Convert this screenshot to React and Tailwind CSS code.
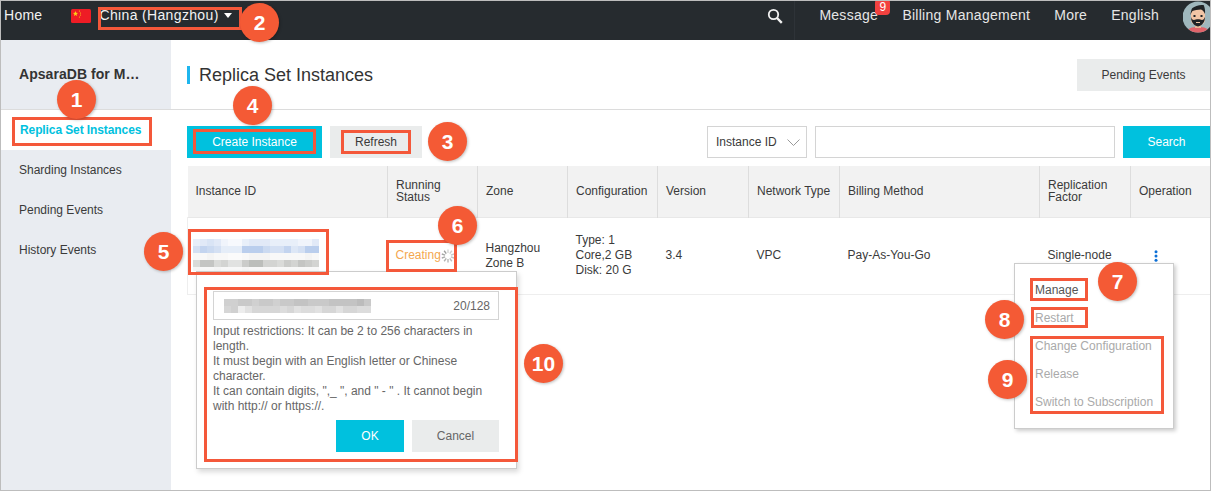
import React from "react";

function Box({ c }) {
  return <div className={"absolute border-[3px] border-[#f4583a] pointer-events-none " + c} />;
}

function Num({ n, c }) {
  return (
    <div className={"absolute w-[39px] h-[39px] rounded-full bg-[#f45a35] text-white font-bold text-[21px] flex items-center justify-center shadow-[1px_1px_3px_rgba(0,0,0,0.25)] " + c}>
      {n}
    </div>
  );
}

function Mosaic({ rows, w, h, cell = 7 }) {
  return (
    <svg width={w} height={h} className="block">
      {rows.map((r, y) =>
        r.cells.map((a, x) => (
          <rect key={x + "-" + y} x={x * cell} y={y * cell} width={cell} height={cell} fill={r.color} opacity={a / 10} />
        ))
      )}
    </svg>
  );
}

const idRows = [
  { color: "#b4c9ec", cells: [3,4,5,4,2,1,1,3,4,4,4,3,3,3,3,2,2,4] },
  { color: "#a9c2e8", cells: [5,7,6,5,3,3,3,8,8,8,6,5,5,7,4,5,8,8] },
  { color: "#dcdcdc", cells: [2,2,3,2,2,1,1,2,3,3,3,2,2,2,2,2,3,2] },
  { color: "#b5b7b4", cells: [5,8,8,5,6,4,4,7,9,9,6,6,5,7,6,8,7,6] },
  { color: "#dddddd", cells: [3,2,2,3,2,2,2,3,2,2,2,2,2,2,2,2,2,2] },
];
const nameRows = [
  { color: "#bcbcbc", cells: [7,7,8,8,7,8,8,7,8,8,9,9,8,8,8,9,9,9,9,10,8] },
  { color: "#c4c4c4", cells: [7,8,3,5,7,7,7,7,6,7,5,6,6,5,7,7,5,7,7,6,6] },
];

const cols = [200, 90, 90, 90, 91, 91, 200, 91, 80];
const head = ["Instance ID", "Running\nStatus", "Zone", "Configuration", "Version", "Network Type", "Billing Method", "Replication\nFactor", "Operation"];

function Spinner() {
  const ticks = Array.from({ length: 10 }, (_, i) => i);
  return (
    <svg width="14" height="14" viewBox="-7 -7 14 14" className="shrink-0">
      {ticks.map((i) => (
        <line key={i} x1="0" y1="-3" x2="0" y2="-6.500" stroke="#999999" strokeWidth="1.400" opacity={0.4 + i * 0.06} transform={`rotate(${i * 36})`} />
      ))}
    </svg>
  );
}

function Avatar() {
  return (
    <svg width="30" height="32" viewBox="0 0 30 32" className="block">
      <defs>
        <clipPath id="av"><circle cx="15" cy="16" r="15.500" /></clipPath>
      </defs>
      <g clipPath="url(#av)">
        <rect width="30" height="32" fill="#9fb7bd" />
        <path d="M3 32c1-5 6-6 12-6s11 1 12 6z" fill="#e0646a" />
        <rect x="12" y="20" width="6" height="7" fill="#e8b596" />
        <rect x="8" y="7" width="14" height="17" rx="5" fill="#f1c5a5" />
        <path d="M7.500 14c0 0 .5-6 2-7 2-2 7-3.500 11-3 1 1 2 6 1.500 9-1-2-2-4-4-4.500-3 .5-7 .5-8.500 1.500-1 1-1.500 3-2 4z" fill="#1f2326" />
        <path d="M8 16c0 2 .5 8 7 9.500 6.500-1.500 7-7.500 7-9.500-1 2-1.500 3-3 3-2-1-6-1-8 0-1.500 0-2.500-1-3-3z" fill="#1f2326" />
        <rect x="13" y="21" width="4" height="1" fill="#f1c5a5" />
        <rect x="10.500" y="14" width="2" height="2" fill="#1f2326" />
        <rect x="17.500" y="14" width="2" height="2" fill="#1f2326" />
      </g>
    </svg>
  );
}

export default function App() {
  return (
    <div className="relative w-[1211px] h-[491px] overflow-hidden bg-white border border-[#bdbdbd] flex flex-col font-['Liberation_Sans',Arial,sans-serif] text-[12px] text-[#3a3a3a]">
      {/* top bar */}
      <header className="h-[39px] shrink-0 bg-[#262b2f] text-white flex items-center text-[14px] tracking-[0.27px]">
        <span className="ml-[3px] -mt-[10px] text-[#f2f2f2]">Home</span>
        <svg width="20" height="14" viewBox="0 0 20 14" className="ml-[29px] -mt-[9px]">
          <rect width="20" height="14" rx="1.500" fill="#ee1c25" />
          <path d="M4.500 2l.7 1.800 1.900.1-1.500 1.200.5 1.900-1.600-1.100-1.600 1.100.5-1.900L1.900 3.900l1.900-.1z" fill="#fbd116" />
          <circle cx="8.500" cy="2" r=".6" fill="#fbd116" />
          <circle cx="9.500" cy="4" r=".6" fill="#fbd116" />
          <circle cx="9.500" cy="6" r=".6" fill="#fbd116" />
          <circle cx="8.500" cy="8" r=".6" fill="#fbd116" />
        </svg>
        <span className="ml-[8px] -mt-[10px] text-[#f2f2f2] tracking-[0.35px]">China (Hangzhou)</span>
        <span className="ml-[5px] -mt-[11px] w-0 h-0 border-x-[4px] border-x-transparent border-t-[5px] border-t-white" />
        <div className="ml-auto flex items-center h-full">
          <svg width="16" height="16" viewBox="0 0 16 16" className="-mt-[9px] mr-[11px]" fill="none" stroke="#f2f2f2">
            <circle cx="6.500" cy="6.500" r="4.700" strokeWidth="1.800" />
            <line x1="10" y1="10" x2="14.800" y2="14.800" strokeWidth="2.400" />
          </svg>
          <div className="w-px h-full bg-[#2e3338] mr-[24px]" />
          <span className="-mt-[10px] relative text-[#e6e6e6] w-[58px]">Message
            <span className="absolute left-[56px] -top-[6px] w-[15px] h-[16px] rounded-[4px] bg-[#f2413f] text-white text-[12px] tracking-normal leading-[16px] text-center">9</span>
          </span>
          <span className="ml-[25px] -mt-[10px] text-[#e6e6e6]">Billing Management</span>
          <span className="ml-[24px] -mt-[10px] text-[#e6e6e6]">More</span>
          <span className="ml-[24px] -mt-[10px] text-[#e6e6e6]">English</span>
          <div className="ml-[24px] w-[27px] -mt-[8px] overflow-hidden"><Avatar /></div>
        </div>
      </header>

      <div className="flex flex-1 min-h-0">
        {/* sidebar */}
        <aside className="w-[170px] shrink-0 bg-[#e9ecf1] flex flex-col">
          <div className="h-[70px] shrink-0 border-b border-[#dcdcdc] flex items-center pl-[18px] text-[14px] font-bold text-[#333] tracking-[0.05px]">
            <span className="mt-[-1px]">ApsaraDB for M…</span>
          </div>
          <div className="h-[40px] shrink-0 bg-white flex items-center pl-[19px] text-[#00c1de] font-bold -tracking-[0.1px] pb-[1px]">Replica Set Instances</div>
          {["Sharding Instances", "Pending Events", "History Events"].map((t) => (
            <div key={t} className="h-[40px] shrink-0 flex items-center pl-[18px]">{t}</div>
          ))}
        </aside>

        {/* main */}
        <main className="flex-1 min-w-0 flex flex-col">
          <div className="h-[70px] shrink-0 border-b border-[#dcdcdc] flex items-center pl-[16px]">
            <span className="w-[3px] h-[18px] bg-[#1fb6ee]" />
            <span className="ml-[9px] mt-[2px] text-[18px] text-[#333]">Replica Set Instances</span>
            <button className="ml-auto w-[133px] h-[32px] bg-[#eaecec] text-[12px]">Pending Events</button>
          </div>

          <div className="pl-[16px] pt-[16px]">
            <div className="flex items-center h-[32px]">
              <button className="w-[135px] h-full bg-[#00c1de] text-white">Create Instance</button>
              <button className="ml-[8px] w-[92px] h-full bg-[#eaecec]">Refresh</button>
              <div className="ml-auto w-[100px] h-full border border-[#d4d4d4] flex items-center pl-[8px] pr-[6px] justify-between">
                <span>Instance ID</span>
                <svg width="13" height="7" viewBox="0 0 13 7" fill="none" stroke="#999"><path d="M.5.500l6 6 6-6" /></svg>
              </div>
              <div className="ml-[8px] w-[300px] h-full border border-[#d4d4d4]" />
              <button className="ml-[8px] w-[87px] h-full bg-[#00c1de] text-white">Search</button>
            </div>

            <table className="mt-[8px] table-fixed border-collapse w-[1023px]">
              <colgroup>
                {cols.map((w, i) => <col key={i} style={{ width: w }} />)}
              </colgroup>
              <thead>
                <tr className="h-[51px] bg-[#f2f2f2] border-b border-[#e8e8e8]">
                  {head.map((h, i) => (
                    <th key={i} className={"font-normal text-left align-middle pl-[8px] whitespace-pre-line leading-[12px] " + (i ? "border-l border-[#dddddd]" : "")}>{h}</th>
                  ))}
                </tr>
              </thead>
              <tbody>
                <tr className="h-[77px] border-b border-[#eeeeee] leading-[15px]">
                  <td className="pl-[5px] border-l border-[#eeeeee] align-top pt-[21px]">
                    <Mosaic rows={idRows} w={126} h={32} />
                  </td>
                  <td className="pl-[8px] align-middle">
                    <div className="flex items-center text-[#f4a84f]">Creating<Spinner /></div>
                  </td>
                  <td className="pl-[8px]">Hangzhou<br />Zone B</td>
                  <td className="pl-[8px]">Type: 1<br />Core,2 GB<br />Disk: 20 G</td>
                  <td className="pl-[8px]">3.4</td>
                  <td className="pl-[8px]">VPC</td>
                  <td className="pl-[8px]">Pay-As-You-Go</td>
                  <td className="pl-[8px]">Single-node</td>
                  <td className="pl-[23px]">
                    <svg width="4" height="12" viewBox="0 0 4 12" fill="#0b6fd6"><circle cx="2" cy="1.700" r="1.500" /><circle cx="2" cy="6" r="1.500" /><circle cx="2" cy="10.300" r="1.500" /></svg>
                  </td>
                </tr>
              </tbody>
            </table>
          </div>
        </main>
      </div>

      {/* edit popover */}
      <div className="absolute left-[195px] top-[270px] w-[321px] h-[198px] bg-white border border-[#cccccc] shadow-[2px_3px_5px_rgba(0,0,0,0.15)] pl-[16px] pr-[16px] pt-[19px] text-[#666]">
        <div className="h-[29px] w-[286px] border border-[#d4d4d4] flex items-center justify-between pl-[10px] pr-[8px]">
          <Mosaic rows={nameRows} w={147} h={14} />
          <span>20/128</span>
        </div>
        <p className="mt-[4px] leading-[15px] w-[280px]">
          Input restrictions: It can be 2 to 256 characters in length.<br />
          It must begin with an English letter or Chinese character.<br />
          It can contain digits, ",_ ", and " - " . It cannot begin with http:// or https://.
        </p>
        <div className="flex justify-end gap-[8px] mt-[6px] w-[286px]">
          <button className="w-[68px] h-[32px] bg-[#00c1de] text-white">OK</button>
          <button className="w-[87px] h-[32px] bg-[#eaecec] text-[#666]">Cancel</button>
        </div>
      </div>

      {/* operation menu */}
      <div className="absolute left-[1013px] top-[262px] w-[160px] h-[166px] bg-white border border-[#cccccc] shadow-[2px_2px_4px_rgba(0,0,0,0.2)] pl-[20px] pt-[12px] flex flex-col text-[#aaaaaa] leading-[28px]">
        <span className="text-[#555]">Manage</span>
        <span>Restart</span>
        <span>Change Configuration</span>
        <span>Release</span>
        <span>Switch to Subscription</span>
      </div>

      {/* annotations */}
      <Box c="left-[11px] top-[116px] w-[140px] h-[29px]" />
      <Box c="left-[97px] top-[6px] w-[144px] h-[23px]" />
      <Box c="left-[192px] top-[128px] w-[123px] h-[25px]" />
      <Box c="left-[340px] top-[129px] w-[70px] h-[24px]" />
      <Box c="left-[187px] top-[228px] w-[141px] h-[46px]" />
      <Box c="left-[385px] top-[239px] w-[71px] h-[32px]" />
      <Box c="left-[203px] top-[286px] w-[314px] h-[175px]" />
      <Box c="left-[1029px] top-[277px] w-[58px] h-[23px]" />
      <Box c="left-[1030px] top-[306px] w-[57px] h-[21px]" />
      <Box c="left-[1029px] top-[335px] w-[134px] h-[78px]" />
      <Num n="1" c="left-[56px] top-[79px]" />
      <Num n="2" c="left-[239px] top-[2px]" />
      <Num n="4" c="left-[232px] top-[85px]" />
      <Num n="3" c="left-[427px] top-[121px]" />
      <Num n="5" c="left-[143px] top-[231px]" />
      <Num n="6" c="left-[437px] top-[205px]" />
      <Num n="7" c="left-[1097px] top-[261px]" />
      <Num n="8" c="left-[984px] top-[299px]" />
      <Num n="9" c="left-[987px] top-[359px]" />
      <Num n="10" c="left-[523px] top-[343px]" />
    </div>
  );
}
